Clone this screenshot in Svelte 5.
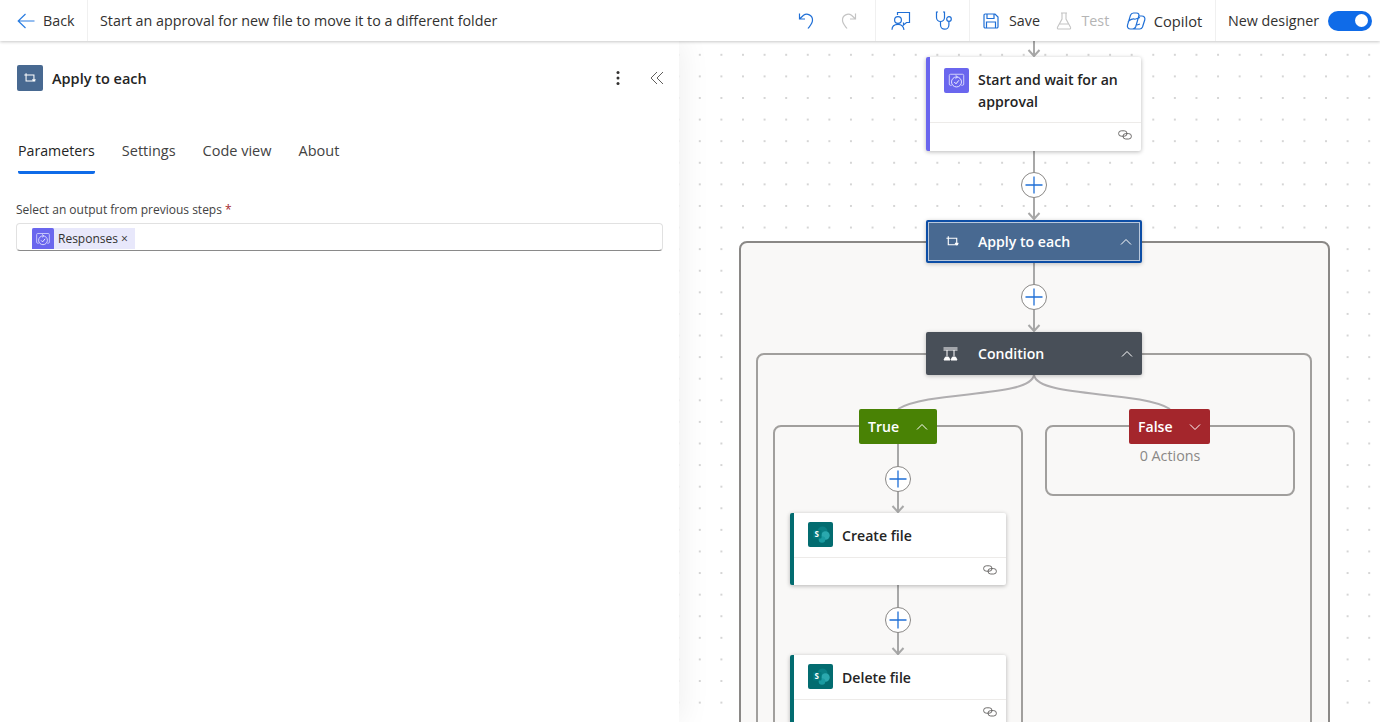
<script>
  const tabs = ['Parameters', 'Settings', 'Code view', 'About'];
  const plusButtons = [[1034, 185], [1034, 297], [898, 479], [898, 620]];
  const lines = [
    [1034, 41, 1034, 56], [1034, 151, 1034, 219], [1034, 263, 1034, 331],
    [898, 444, 898, 512], [898, 585, 898, 654]
  ];
  const arrows = [[1034, 56], [1034, 219], [1034, 331], [898, 512], [898, 654]];
</script>

{#snippet loopIcon(size)}
  <svg width={size} height={size} viewBox="0 0 16 16" fill="none" stroke="#fff" stroke-width="1.2">
    <path d="M1.500 4.500H12.500V11M3.500 2.500V11.500H14M10.800 9.500 12.500 11.500 14.200 9.500"/>
  </svg>
{/snippet}

{#snippet approvalIcon(size)}
  <svg width={size} height={size} viewBox="0 0 26 26" class="tile">
    <rect width="26" height="26" rx="2" fill="#6a66ee"/>
    <path d="M8 18H6.800A1.300 1.300 0 0 1 5.500 16.700V7.800A1.300 1.300 0 0 1 6.800 6.500H19.200A1.300 1.300 0 0 1 20.500 7.800V16.700A1.300 1.300 0 0 1 19.200 18H18" fill="none" stroke="#d4d4fb" stroke-width="1"/>
    <circle cx="13" cy="14.500" r="5.200" fill="#6a66ee" stroke="#e6e6ff" stroke-width="1"/>
    <path d="M10.700 14.600 12.500 16.400 15.500 12.800" fill="none" stroke="#fff" stroke-width="1"/>
    <path d="M12 7.500 14 9.300 12 11" fill="none" stroke="#e6e6ff" stroke-width="1"/>
  </svg>
{/snippet}

{#snippet sharepointIcon()}
  <span class="sp">
    <svg width="25" height="25" viewBox="0 0 25 25">
      <rect width="25" height="25" rx="2" fill="#036c70"/>
      <circle cx="14.500" cy="9.500" r="5" fill="#0a7f84"/>
      <circle cx="17.500" cy="13.500" r="4.200" fill="#2aa8ae"/>
      <circle cx="14" cy="17.500" r="3.300" fill="#1a9ba1"/>
      <rect x="5" y="8" width="8.500" height="8.500" rx="1" fill="#03787c"/>
    </svg>
    <b>S</b>
  </span>
{/snippet}

{#snippet linkIcon()}
  <svg class="link" width="14" height="10" viewBox="0 0 14 10" fill="none" stroke="#605e5c" stroke-width="0.9">
    <rect x="0.6" y="0.8" width="8.4" height="5.4" rx="2.7"/>
    <rect x="5" y="3.6" width="8.4" height="5.4" rx="2.7"/>
  </svg>
{/snippet}

{#snippet chevron(up)}
  <svg width="12" height="8" viewBox="0 0 12 8" fill="none" stroke="#fff" stroke-width="1">
    <path d={up ? 'M1 6.500 6 1.500 11 6.500' : 'M1 1.500 6 6.500 11 1.500'}/>
  </svg>
{/snippet}

<div class="app">
  <header>
    <div class="seg back">
      <svg width="18" height="16" viewBox="0 0 18 16" fill="none" stroke="#2a7de1" stroke-width="1.2"><path d="M8.500 1 1.200 8 8.500 15M1.200 8H17.500"/></svg>
      <span>Back</span>
    </div>
    <div class="seg title">Start an approval for new file to move it to a different folder</div>
    <div class="seg history">
      <svg width="16" height="18" viewBox="0 0 16 18" fill="none" stroke="#1f6fd6" stroke-width="1.2"><path d="M1.500 1.500V7H7M1.800 6.800 5.500 3.300C9 .8 14.500 3 14.500 8c0 3.500-2.200 5.500-4.500 8.500"/></svg>
      <svg width="16" height="18" viewBox="0 0 16 18" fill="none" stroke="#c4c4c4" stroke-width="1.2"><path d="M14.500 1.500V7H9M14.200 6.800 10.500 3.300C7 .8 1.500 3 1.500 8c0 3.500 2.200 5.500 4.500 8.500"/></svg>
    </div>
    <div class="seg tools">
      <svg width="20" height="20" viewBox="0 0 20 20" fill="none" stroke="#1f6fd6" stroke-width="1.2"><path d="M6.500 4V1.500H18.500V11.500H15.500L12.500 14V11.500"/><circle cx="7" cy="9" r="3.400"/><path d="M1 18.800c0-3.500 2.500-5.500 6-5.500s5.500 2 6 5.500"/></svg>
      <svg width="20" height="20" viewBox="0 0 20 20" fill="none" stroke="#1f6fd6" stroke-width="1.2"><path d="M3 1H1.500V6.500a4 4 0 0 0 8 0V1H8M5.500 10.500V14a4.200 4.200 0 0 0 8.400 0V10.300"/><circle cx="14" cy="8" r="2.300"/></svg>
    </div>
    <div class="seg actions">
      <span class="act save">
        <svg width="16" height="16" viewBox="0 0 16 16" fill="none" stroke="#1f6fd6" stroke-width="1.2"><path d="M1 2.200A1.200 1.200 0 0 1 2.200 1H12l3 3v9.800a1.200 1.200 0 0 1-1.200 1.200H2.200A1.200 1.200 0 0 1 1 13.800ZM4 1v4.500h7V1M3.500 15V9h9v6"/></svg>
        <span>Save</span>
      </span>
      <span class="act disabled">
        <svg width="16" height="18" viewBox="0 0 16 18" fill="none" stroke="#c4c4c4" stroke-width="1.1"><path d="M5 1h6M6 1v6L1.500 15.200A1.200 1.200 0 0 0 2.600 17h10.800a1.200 1.200 0 0 0 1.100-1.800L10 7V1M3.500 12h9"/></svg>
        <span>Test</span>
      </span>
      <span class="act copilot">
        <svg width="20" height="20" viewBox="0 0 20 20" fill="none" stroke="#1f6fd6" stroke-width="1.2"><path d="M7.500 2h3c2 0 2.800 1.500 2.300 3L9.800 15.500C9.200 17.300 8 18 6.500 18H4.500C2.200 18 1 16.200 1.500 14.200L4.500 4.200C5 2.800 6 2 7.500 2ZM13 5h2.800c2.300 0 3.500 1.800 3 3.800L16.500 16c-.5 1.300-1.500 2-2.800 2H6.500M2 11c1.500-2.500 5-3.500 7-2.800L14 6.500M9.500 14.500l4.500-1.500"/></svg>
        <span>Copilot</span>
      </span>
    </div>
    <div class="seg designer">
      <span>New designer</span>
      <span class="toggle"><i></i></span>
    </div>
  </header>

  <main>
    <aside>
      <div class="panel-head">
        <span class="panel-icon">{@render loopIcon(14)}</span>
        <h2>Apply to each</h2>
        <svg class="kebab" width="4" height="16" viewBox="0 0 4 16" fill="#323130"><circle cx="2" cy="2.500" r="1.500"/><circle cx="2" cy="8" r="1.500"/><circle cx="2" cy="13.500" r="1.500"/></svg>
        <svg class="collapse" width="14" height="14" viewBox="0 0 14 14" fill="none" stroke="#605e5c" stroke-width="1"><path d="M7 1 1 7l6 6M13 1 7 7l6 6"/></svg>
      </div>
      <nav>
        {#each tabs as tab, i}
          <span class="tab" class:active={i === 0}>{tab}</span>
        {/each}
      </nav>
      <label for="output">Select an output from previous steps <em>*</em></label>
      <div class="field" id="output">
        <span class="chip">
          {@render approvalIcon(22)}
          <span>Responses ×</span>
        </span>
      </div>
    </aside>

    <section class="canvas">
      <div class="box outer"></div>
      <div class="box inner"></div>
      <div class="box truebox"></div>
      <div class="box falsebox"><span>0 Actions</span></div>

      <svg class="wires" width="701" height="681" viewBox="679 41 701 681" fill="none">
        {#each lines as l}
          <line x1={l[0]} y1={l[1]} x2={l[2]} y2={l[3]} stroke="#a8a8a8" stroke-width="2"/>
        {/each}
        <path d="M1034 375C1030 398 930 390 898 409M1034 375C1038 398 1138 390 1170 409" stroke="#b0aeb0" stroke-width="2"/>
        {#each arrows as a}
          <path d="M{a[0] - 5.500} {a[1] - 6}L{a[0]} {a[1]}L{a[0] + 5.500} {a[1] - 6}" stroke="#a8a8a8" stroke-width="2"/>
        {/each}
        {#each plusButtons as p}
          <circle cx={p[0]} cy={p[1]} r="12.500" fill="#fff" stroke="#8a8886" stroke-width="1"/>
          <path d="M{p[0] - 8.500} {p[1]}H{p[0] + 8.500}M{p[0]} {p[1] - 8.500}V{p[1] + 8.500}" stroke="#1f6fd6" stroke-width="1.300"/>
        {/each}
      </svg>

      <div class="card approval">
        <div class="card-main">
          {@render approvalIcon(25)}
          <span>Start and wait for an approval</span>
        </div>
        <div class="card-foot">{@render linkIcon()}</div>
      </div>

      <div class="scope apply">
        {@render loopIcon(15)}
        <span>Apply to each</span>
        {@render chevron(true)}
      </div>

      <div class="scope condition">
        <svg width="15" height="14" viewBox="0 0 15 14" fill="none" stroke="#fff" stroke-width="1"><path d="M.5 1h14M.5 3h14M4 3v6M11 3v6"/><path d="M1 13 2.500 10H5.500L7 13ZM8 13 9.500 10H12.500L14 13Z" fill="#fff"/></svg>
        <span>Condition</span>
        {@render chevron(true)}
      </div>

      <div class="branch yes"><span>True</span>{@render chevron(true)}</div>
      <div class="branch no"><span>False</span>{@render chevron(false)}</div>

      <div class="card sp-card create">
        <div class="card-main">{@render sharepointIcon()}<span>Create file</span></div>
        <div class="card-foot">{@render linkIcon()}</div>
      </div>
      <div class="card sp-card remove">
        <div class="card-main">{@render sharepointIcon()}<span>Delete file</span></div>
        <div class="card-foot">{@render linkIcon()}</div>
      </div>
    </section>
  </main>
</div>

<style>
  :global(body) { margin: 0; background: #fff; }
  .app {
    width: 1380px; height: 722px; overflow: hidden;
    display: flex; flex-direction: column;
    font-family: "Open Sans", "Noto Sans", sans-serif;
    color: #323130;
  }
  header {
    height: 41px; flex: none; display: flex; align-items: center;
    background: #fff; position: relative; z-index: 3;
    box-shadow: 0 1px 3px rgba(0,0,0,.22);
    font-size: 14.300px;
  }
  .seg { height: 41px; display: flex; align-items: center; box-sizing: border-box; }
  .back { width: 88px; padding-left: 17px; gap: 8px; border-right: 1px solid #f0f0f0; }
  .title { width: 695px; padding-left: 12px; }
  .history { width: 93px; padding-left: 15px; gap: 27px; border-right: 1px solid #f0f0f0; }
  .tools { width: 94px; padding-left: 15px; gap: 24px; border-right: 1px solid #f0f0f0; }
  .actions { width: 246px; padding-left: 13px; gap: 16.500px; border-right: 1px solid #f0f0f0; }
  .act { display: flex; align-items: center; gap: 9px; }
  .save { gap: 10px; }
  .copilot { gap: 8px; font-size: 14.700px; }
  .disabled { color: #b5b5b5; }
  .designer { padding-left: 12px; gap: 9px; }
  .toggle { width: 44px; height: 20px; border-radius: 10px; background: #0f6be8; display: flex; align-items: center; justify-content: flex-end; padding-right: 4px; box-sizing: border-box; }
  .toggle i { width: 13px; height: 13px; border-radius: 50%; background: #fff; }

  main { flex: 1; display: flex; min-height: 0; }
  aside { width: 679px; flex: none; box-sizing: border-box; padding: 24px 16px 0; background: #fff; position: relative; z-index: 2; box-shadow: 2px 0 30px rgba(0,0,0,.07); }
  .panel-head { display: flex; align-items: center; height: 26px; padding-left: 1px; }
  .panel-icon { width: 26px; height: 26px; background: #486991; border-radius: 2px; display: flex; align-items: center; justify-content: center; }
  h2 { margin: 0 0 0 9px; font-size: 14.500px; font-weight: 600; flex: 1; color: #242424; }
  .kebab { margin-right: 30px; }
  .collapse { margin-right: -1px; }
  nav { display: flex; gap: 27px; margin-top: 50px; padding-left: 2px; font-size: 14.500px; }
  .tab { padding-bottom: 11px; border-bottom: 3px solid transparent; color: #424242; border-radius: 0 0 2px 2px; }
  .tab.active { color: #242424; font-weight: 500; font-size: 14.200px; border-bottom-color: #0f6be8; }
  label { display: block; margin-top: 27px; font-size: 12px; color: #424242; }
  em { color: #a4262c; font-style: normal; }
  .field { margin-top: 5px; height: 28px; width: 647px; box-sizing: border-box; border: 1px solid #e1e1e1; border-bottom: 1px solid #8a8a8a; border-radius: 4px; padding: 4px 0 0 15px; }
  .chip { display: inline-flex; align-items: center; gap: 4px; height: 21px; width: 103px; background: #e8e8fb; font-size: 12px; overflow: hidden; }
  .tile { flex: none; }

  .canvas {
    flex: 1; position: relative; overflow: hidden;
    background-color: #fff;
    background-image: radial-gradient(circle, #c8c8c8 .6px, transparent 1px);
    background-size: 21.600px 21.600px;
    background-position: 10px 3px;
  }
  .wires { position: absolute; left: 0; top: 0; }
  .box { position: absolute; box-sizing: border-box; border: 2px solid #a19f9d; border-radius: 8px; background: #f9f8f7; }
  .outer { left: 60px; top: 200px; width: 591px; height: 620px; border-color: #8a8886; }
  .inner { left: 77px; top: 312px; width: 556px; height: 600px; }
  .truebox { left: 94px; top: 384px; width: 250px; height: 500px; }
  .falsebox { left: 366px; top: 384px; width: 250px; height: 71px; text-align: center; font-size: 14.300px; color: #8a8886; padding-top: 19px; }

  .card { position: absolute; box-sizing: border-box; background: #fff; border-radius: 2px; box-shadow: 0 1px 4px rgba(0,0,0,.28); display: flex; flex-direction: column; border-left: 4px solid #6a66ee; }
  .card-main { display: flex; gap: 9px; padding: 11px 12px 0 14px; font-size: 14.100px; font-weight: 600; line-height: 22px; color: #242424; box-sizing: border-box; }
  .card-main > span:last-child { flex: 1; padding-top: 1px; }
  .card-foot { flex: 1; border-top: 1px solid #edebe9; display: flex; justify-content: flex-end; align-items: flex-start; padding: 7px 9px 0 0; }
  .approval { left: 247px; top: 16px; width: 215px; height: 94px; }
  .approval .card-main { height: 65px; }
  .sp-card { border-left-color: #036c70; width: 216px; left: 111px; }
  .sp-card .card-main { height: 44px; padding-top: 9px; align-items: flex-start; }
  .sp-card .card-main > span:last-child { padding-top: 3px; }
  .create { top: 472px; height: 72px; }
  .remove { top: 614px; height: 130px; }
  .sp { position: relative; width: 25px; height: 25px; display: block; flex: none; }
  .sp svg { display: block; }
  .sp b { position: absolute; left: 6.500px; top: 6px; font-size: 8px; line-height: 12px; color: #fff; font-weight: 700; }

  .scope { position: absolute; left: 247px; width: 216px; height: 43px; box-sizing: border-box; display: flex; align-items: center; color: #fff; font-size: 14.100px; font-weight: 600; padding: 0 9px 0 17px; border-radius: 2px; box-shadow: 0 1px 4px rgba(0,0,0,.25); }
  .scope span { flex: 1; margin-left: 20px; }
  .apply { top: 179px; background: #486991; border: 2px solid #0d4ea6; outline: 1px solid #b9c8dc; outline-offset: -3px; padding-right: 8px; }
  .apply span { margin-left: 18px; }
  .condition { top: 291px; background: #484f58; }

  .branch { position: absolute; top: 368px; height: 35px; box-sizing: border-box; display: flex; align-items: center; color: #fff; font-size: 14.100px; font-weight: 600; padding: 0 9px; border-radius: 2px; justify-content: space-between; }
  .yes { left: 180px; width: 78px; background: #498205; }
  .no { left: 450px; width: 81px; background: #a4262c; }
</style>
